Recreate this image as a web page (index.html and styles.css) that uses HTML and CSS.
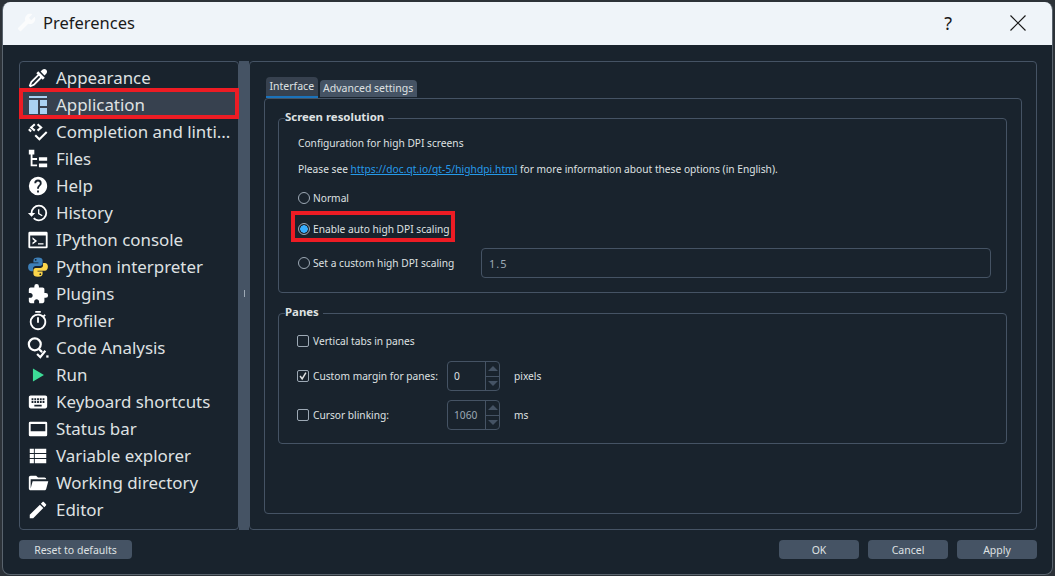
FILE: index.html
```html
<!DOCTYPE html>
<html>
<head>
    <title>Preferences</title>
    <meta charset="UTF-8">
    <link rel="stylesheet" href="styles.css">
</head>
<body>
    <div class="window">
        <div class="titlebar">
            <svg class="title-icon" viewBox="0 0 24 24"><path transform="matrix(-1 0 0 1 24 0)" d="M22.7,19L13.6,9.9C14.5,7.6 14,4.9 12.1,3C10.1,1 7.1,0.6 4.7,1.7L9,6L6,9L1.6,4.7C0.4,7.1 0.9,10.1 2.9,12.1C4.8,14 7.5,14.5 9.8,13.6L18.9,22.7C19.3,23.1 19.9,23.1 20.3,22.7L22.6,20.4C23.1,20 23.1,19.3 22.7,19Z"/></svg>
            <span class="title-text">Preferences</span>
            <span class="help-btn">?</span>
            <svg class="close-btn" viewBox="0 0 16 16"><path d="M0.5 0.5L15.5 15.5M15.5 0.5L0.5 15.5"/></svg>
        </div>

        <div class="content">
            <div class="split">
                <div class="nav">
                    <div class="nav-item">
                        <svg viewBox="0 0 24 24"><path d="M19.35,11.72L17.22,13.85L15.81,12.43L8.1,20.14L3.5,22L2,20.5L3.86,15.9L11.57,8.19L10.15,6.78L12.28,4.65L19.35,11.72M16.76,3C17.93,1.83 19.83,1.83 21,3C22.17,4.17 22.17,6.07 21,7.24L19.08,9.16L14.84,4.92L16.76,3M5.56,17.03L4.5,19.5L6.97,18.44L14.4,11L13,9.6L5.56,17.03Z"/></svg>
                        Appearance
                    </div>
                    <div class="nav-item selected">
                        <svg viewBox="-2 -2 22 22"><path class="sel-icon" d="M0 0H18V2H0ZM0 4H9V18H0ZM11 4H18V10H11ZM11 12H18V18H11Z"/></svg>
                        Application
                    </div>
                    <div class="nav-item">
                        <svg viewBox="0 0 24 24"><path class="line" d="M8.500 3.500L4.500 7L8.500 10.500M11.500 3.500L15.500 7L11.500 10.500M9 15.500L13.500 20L21.500 12M2 9L4.500 11.500" stroke-width="2.200"/></svg>
                        Completion and linti...
                    </div>
                    <div class="nav-item">
                        <svg viewBox="0 0 24 24"><path d="M2 2H8V7H2ZM4 7H6V18H11V20H4ZM6 11H11V13H6ZM13 10H22V14H13ZM13 17H22V21H13Z"/></svg>
                        Files
                    </div>
                    <div class="nav-item">
                        <svg viewBox="0 0 24 24"><path d="M15.07,11.25L14.17,12.17C13.45,12.89 13,13.5 13,15H11V14.5C11,13.39 11.45,12.39 12.17,11.67L13.41,10.41C13.78,10.05 14,9.55 14,9C14,7.89 13.1,7 12,7A2,2 0 0,0 10,9H8A4,4 0 0,1 12,5A4,4 0 0,1 16,9C16,9.88 15.64,10.67 15.07,11.25M13,19H11V17H13M12,2A10,10 0 0,0 2,12A10,10 0 0,0 12,22C17.5,22 22,17.5 22,12C22,6.47 17.5,2 12,2Z"/></svg>
                        Help
                    </div>
                    <div class="nav-item">
                        <svg viewBox="0 0 24 24"><path d="M13.5,8H12V13L16.28,15.54L17,14.33L13.5,12.25V8M13,3A9,9 0 0,0 4,12H1L4.96,16.03L9,12H6A7,7 0 0,1 13,5A7,7 0 0,1 20,12A7,7 0 0,1 13,19C11.07,19 9.32,18.21 8.06,16.94L6.64,18.36C8.27,20 10.5,21 13,21A9,9 0 0,0 22,12A9,9 0 0,0 13,3"/></svg>
                        History
                    </div>
                    <div class="nav-item">
                        <svg viewBox="0 0 24 24"><path fill-rule="evenodd" d="M3 3H21A1.500 1.500 0 0 1 22.500 4.500V19.500A1.500 1.500 0 0 1 21 21H3A1.500 1.500 0 0 1 1.500 19.500V4.500A1.500 1.500 0 0 1 3 3ZM3.500 7V19H20.500V7ZM6 9L11 13L6 17V14.800L8.500 13L6 11.200ZM12 15.500H18V17H12Z"/></svg>
                        IPython console
                    </div>
                    <div class="nav-item">
                        <svg viewBox="0 0 24 24"><path class="py-blue" d="M12 1.500C8.500 1.500 7 2.800 7 4.500V7H12.500V8H4.500C2.500 8 1.200 9.800 1.200 12.300C1.200 14.800 2.500 16.500 4.500 16.500H6.500V13.800C6.500 12 8 10.800 9.500 10.800H14.500C16 10.800 17 9.700 17 8.300V4.500C17 2.800 15.500 1.500 12 1.500ZM9.500 3.200A1 1 0 1 1 9.500 5.200A1 1 0 1 1 9.500 3.200Z"/><path class="py-yellow" d="M12 22.500C15.500 22.500 17 21.200 17 19.500V17H11.500V16H19.500C21.500 16 22.800 14.200 22.800 11.700C22.800 9.200 21.500 7.500 19.500 7.500H17.500V10.200C17.500 12 16 13.200 14.500 13.200H9.500C8 13.200 7 14.300 7 15.700V19.500C7 21.200 8.500 22.500 12 22.500ZM14.500 18.800A1 1 0 1 1 14.500 20.800A1 1 0 1 1 14.500 18.800Z"/></svg>
                        Python interpreter
                    </div>
                    <div class="nav-item">
                        <svg viewBox="0 0 24 24"><path d="M20.5,11H19V7C19,5.89 18.1,5 17,5H13V3.5A2.5,2.5 0 0,0 10.5,1A2.5,2.5 0 0,0 8,3.5V5H4A2,2 0 0,0 2,7V10.8H3.5C5,10.8 6.2,12 6.2,13.5C6.2,15 5,16.2 3.5,16.2H2V20A2,2 0 0,0 4,22H7.8V20.5C7.8,19 9,17.8 10.5,17.8C12,17.8 13.2,19 13.2,20.5V22H17A2,2 0 0,0 19,20V16H20.5A2.5,2.5 0 0,0 23,13.5A2.5,2.5 0 0,0 20.5,11Z"/></svg>
                        Plugins
                    </div>
                    <div class="nav-item">
                        <svg viewBox="0 0 24 24"><path d="M12,20A7,7 0 0,1 5,13A7,7 0 0,1 12,6A7,7 0 0,1 19,13A7,7 0 0,1 12,20M19.03,7.39L20.45,5.97C20,5.46 19.55,5 19.04,4.56L17.62,6C16.07,4.74 14.12,4 12,4A9,9 0 0,0 3,13A9,9 0 0,0 12,22C17,22 21,17.97 21,13C21,10.88 20.26,8.93 19.03,7.39M11,14H13V8H11M15,1H9V3H15V1Z"/></svg>
                        Profiler
                    </div>
                    <div class="nav-item">
                        <svg viewBox="0 0 24 24"><circle class="line" cx="8.500" cy="8" r="6.500" stroke-width="2.400"/><path class="line" d="M13 13L16.500 16.500M11 18.500L14.500 22L20 15" stroke-width="2.400"/><path d="M21 20H23.500V22.500H21Z"/></svg>
                        Code Analysis
                    </div>
                    <div class="nav-item">
                        <svg viewBox="0 0 24 24"><path class="run-icon" d="M6.500 5L18.500 12L6.500 19Z"/></svg>
                        Run
                    </div>
                    <div class="nav-item">
                        <svg viewBox="0 0 24 24"><path d="M19,10H17V8H19M19,13H17V11H19M16,10H14V8H16M16,13H14V11H16M16,17H8V15H16M7,10H5V8H7M7,13H5V11H7M8,11H10V13H8M8,8H10V10H8M11,11H13V13H11M11,8H13V10H11M20,5H4C2.89,5 2,5.89 2,7V17A2,2 0 0,0 4,19H20A2,2 0 0,0 22,17V7C22,5.89 21.1,5 20,5Z"/></svg>
                        Keyboard shortcuts
                    </div>
                    <div class="nav-item">
                        <svg viewBox="0 0 24 24"><path fill-rule="evenodd" d="M3.500 4H20.500A1.500 1.500 0 0 1 22 5.500V18.500A1.500 1.500 0 0 1 20.500 20H3.500A1.500 1.500 0 0 1 2 18.500V5.500A1.500 1.500 0 0 1 3.500 4ZM4 6.500V14.500H20V6.500Z"/></svg>
                        Status bar
                    </div>
                    <div class="nav-item">
                        <svg viewBox="0 0 24 24"><path d="M3 4H7.500V8.700H3ZM8.500 4H21V8.700H8.500ZM3 9.700H7.500V14.300H3ZM8.500 9.700H21V14.300H8.500ZM3 15.300H7.500V20H3ZM8.500 15.300H21V20H8.500Z"/></svg>
                        Variable explorer
                    </div>
                    <div class="nav-item">
                        <svg viewBox="0 0 24 24"><path d="M19,20H4C2.89,20 2,19.1 2,18V6C2,4.89 2.89,4 4,4H10L12,6H19A2,2 0 0,1 21,8H21L4,8V18L6.14,10H23.21L20.93,18.5C20.7,19.37 19.92,20 19,20Z"/></svg>
                        Working directory
                    </div>
                    <div class="nav-item">
                        <svg viewBox="0 0 24 24"><path d="M20.71,7.04C21.1,6.65 21.1,6 20.71,5.63L18.37,3.29C18,2.9 17.35,2.9 16.96,3.29L15.12,5.12L18.87,8.87M3,17.25V21H6.75L17.81,9.93L14.06,6.18L3,17.25Z"/></svg>
                        Editor
                    </div>
                </div>

                <div class="splitter"><span class="grip"></span></div>

                <div class="page">
                    <div class="tabs">
                        <div class="tab active">Interface</div>
                        <div class="tab">Advanced settings</div>
                    </div>
                    <div class="tab-pane">
                        <fieldset class="group group-screen">
                            <legend>Screen resolution</legend>
                            <div class="row row-text">Configuration for high DPI screens</div>
                            <div class="row row-text">Please see&nbsp;<span class="link">https://doc.qt.io/qt-5/highdpi.html</span>&nbsp;for more information about these options (in English).</div>
                            <div class="row row-radio"><span class="radio"></span>Normal</div>
                            <div class="row row-radio row-marked"><span class="radio checked"></span>Enable auto high DPI scaling</div>
                            <div class="row row-custom">
                                <span class="radio"></span><span class="custom-label">Set a custom high DPI scaling</span>
                                <div class="line-edit">1.5</div>
                            </div>
                        </fieldset>

                        <fieldset class="group group-panes">
                            <legend>Panes</legend>
                            <div class="row row-check"><span class="check"></span>Vertical tabs in panes</div>
                            <div class="row row-spin">
                                <span class="check checked"><svg viewBox="0 0 12 12"><path d="M2.500 6L5 9.500L9.500 2"/></svg></span>
                                <span class="spin-label">Custom margin for panes:</span>
                                <div class="spin"><span class="spin-value">0</span><span class="arrows"><span class="arrow up"></span><span class="arrow down"></span></span></div>
                                <span class="unit">pixels</span>
                            </div>
                            <div class="row row-spin">
                                <span class="check"></span>
                                <span class="spin-label">Cursor blinking:</span>
                                <div class="spin off"><span class="spin-value">1060</span><span class="arrows"><span class="arrow up"></span><span class="arrow down"></span></span></div>
                                <span class="unit">ms</span>
                            </div>
                        </fieldset>
                    </div>
                </div>
            </div>

            <div class="buttons">
                <button class="reset">Reset to defaults</button>
                <span class="spacer"></span>
                <button>OK</button>
                <button>Cancel</button>
                <button>Apply</button>
            </div>
        </div>
    </div>
</body>
</html>
```

FILE: styles.css
```css
body {
    margin: 0;
    height: 576px;
    overflow: hidden;
    background-color: #2c3238;
    font-family: "Noto Sans", sans-serif;
    color: #dfe1e2;
}
.window {
    box-sizing: border-box;
    width: 1051px;
    height: 573px;
    margin: 2px 0 0 2px;
    background-color: #19232d;
    border: 1px solid #59636d;
    border-top: none;
    border-radius: 8px;
    overflow: hidden;
}

.titlebar {
    box-sizing: border-box;
    display: flex;
    align-items: center;
    height: 43px;
    padding: 0 26px 2px 14px;
    background-color: #eff4f9;
    color: #1a1a1a;
}
.title-icon {
    width: 19px;
    height: 19px;
    fill: #fbfcfd;
}
.title-text {
    margin-left: 7px;
    font-size: 16.5px;
}
.help-btn {
    margin-left: auto;
    margin-right: 58px;
    font-size: 18px;
}
.close-btn {
    width: 16px;
    height: 16px;
    fill: none;
    stroke: #1a1a1a;
    stroke-width: 1.2;
}

.content {
    padding: 16px 15px 0 16px;
}
.split {
    display: flex;
    height: 469px;
}

.nav {
    box-sizing: border-box;
    width: 220px;
    padding-top: 2px;
    border: 1px solid #455364;
    border-radius: 4px;
}
.nav-item {
    position: relative;
    display: flex;
    align-items: center;
    height: 27px;
    padding-left: 7px;
    font-size: 16.9px;
    white-space: nowrap;
}
.nav-item svg {
    flex: none;
    width: 22px;
    height: 22px;
    margin-right: 7px;
    fill: #fff;
}
.nav-item .line {
    fill: none;
    stroke: #fff;
}
.nav-item.selected {
    background-color: #37414f;
}
.nav-item.selected::after {
    content: "";
    position: absolute;
    top: -3px;
    left: -1px;
    right: -1px;
    bottom: -1px;
    border: 4px solid #ed1c24;
}
.nav-item svg .sel-icon {
    fill: #a9d1f2;
}
.nav-item svg .py-blue {
    fill: #3d7fb8;
}
.nav-item svg .py-yellow {
    fill: #fbd54a;
}
.nav-item svg .run-icon {
    fill: #3ddc97;
}

.splitter {
    display: flex;
    align-items: center;
    justify-content: center;
    width: 10px;
    background-color: #455364;
}
.grip {
    width: 1px;
    height: 7px;
    margin-top: -4px;
    background-color: #9da9b5;
}

.page {
    box-sizing: border-box;
    width: 788px;
    padding: 15px 14px 0 14px;
    border: 1px solid #455364;
    border-radius: 4px;
    font-size: 10.2px;
}
.tabs {
    display: flex;
    align-items: flex-end;
    height: 21px;
    padding-left: 2px;
    gap: 2px;
}
.tab {
    height: 17px;
    margin-bottom: 1px;
    padding: 0 3.500px;
    font-size: 10.5px;
    line-height: 17px;
    background-color: #455364;
    border-radius: 4px 4px 0 0;
    color: #dfe1e2;
}
.tab.active {
    height: 19px;
    margin-bottom: 0;
    line-height: 19px;
    background-color: #37414f;
    border-bottom: 2px solid #1a72bb;
}
.tab-pane {
    box-sizing: border-box;
    height: 416px;
    padding: 12px 14px 0 13px;
    border: 1px solid #455364;
    border-radius: 4px;
}

.group {
    box-sizing: border-box;
    margin: 0;
    padding: 0 0 0 19px;
    border: 1px solid #455364;
    border-radius: 4px;
}
.group legend {
    margin-left: -13px;
    padding: 0 4px 2px 0;
    font-size: 11.4px;
    font-weight: 700;
    line-height: 12px;
}
.group-screen {
    height: 182px;
}
.group-panes {
    height: 138px;
    margin-top: 13px;
}

.row {
    position: relative;
    display: flex;
    align-items: center;
    height: 26px;
}
.row-text:first-of-type {
    margin-top: 5px;
}
.row-radio {
    margin-top: 3px;
}
.row-radio + .row-radio {
    margin-top: 5px;
}
.row-marked::after {
    content: "";
    position: absolute;
    top: -5px;
    left: -7px;
    width: 164px;
    height: 31px;
    box-sizing: border-box;
    border: 4px solid #ed1c24;
}
.link {
    color: #259ae9;
    text-decoration: underline;
    letter-spacing: 0.06px;
}

.radio {
    box-sizing: border-box;
    flex: none;
    width: 12px;
    height: 12px;
    margin-right: 3px;
    border: 1px solid #9da9b5;
    border-radius: 50%;
}
.radio.checked {
    background: radial-gradient(circle, #37aeff 0 3.500px, #19232d 4px);
}
.row-custom {
    height: 30px;
    margin-top: 6px;
}
.custom-label {
    width: 168px;
}
.line-edit {
    box-sizing: border-box;
    width: 510px;
    height: 30px;
    padding-left: 7px;
    line-height: 30px;
    border: 1px solid #455364;
    border-radius: 4px;
    color: #9da9b5;
    font-size: 11px;
    letter-spacing: 1px;
}

.check {
    box-sizing: border-box;
    flex: none;
    width: 12px;
    height: 12px;
    margin-left: -1px;
    margin-right: 4px;
    border: 1px solid #9da9b5;
    border-radius: 2px;
}
.check svg {
    display: block;
    width: 10px;
    height: 10px;
    fill: none;
    stroke: #dfe1e2;
    stroke-width: 1.800;
}
.group-panes .row-check {
    margin-top: 8px;
}
.row-spin {
    height: 30px;
    margin-top: 9px;
}
.row-check + .row-spin {
    margin-top: 7px;
}
.spin-label {
    width: 134px;
}
.spin {
    box-sizing: border-box;
    display: flex;
    justify-content: space-between;
    width: 53px;
    height: 30px;
    border: 1px solid #455364;
    border-radius: 4px;
}
.spin-value {
    padding-left: 6px;
    line-height: 28px;
}
.spin.off .spin-value {
    color: #9da9b5;
}
.arrows {
    display: flex;
    flex-direction: column;
    width: 13px;
    border-left: 1px solid #455364;
}
.arrow {
    flex: 1;
    display: flex;
    align-items: center;
    justify-content: center;
}
.arrow.up {
    border-bottom: 1px solid #455364;
}
.arrow::before {
    content: "";
    border-left: 5px solid transparent;
    border-right: 5px solid transparent;
}
.arrow.up::before {
    border-bottom: 5px solid #455364;
}
.arrow.down::before {
    border-top: 5px solid #455364;
}
.unit {
    margin-left: 14px;
}

.buttons {
    display: flex;
    gap: 9px;
    margin-top: 10px;
}
.spacer {
    flex: 1;
}
button {
    width: 80px;
    height: 19px;
    padding: 0;
    border: none;
    border-radius: 4px;
    background-color: #455364;
    color: #dfe1e2;
    font-family: inherit;
    font-size: 10.5px;
}
button.reset {
    width: 113px;
}
```
